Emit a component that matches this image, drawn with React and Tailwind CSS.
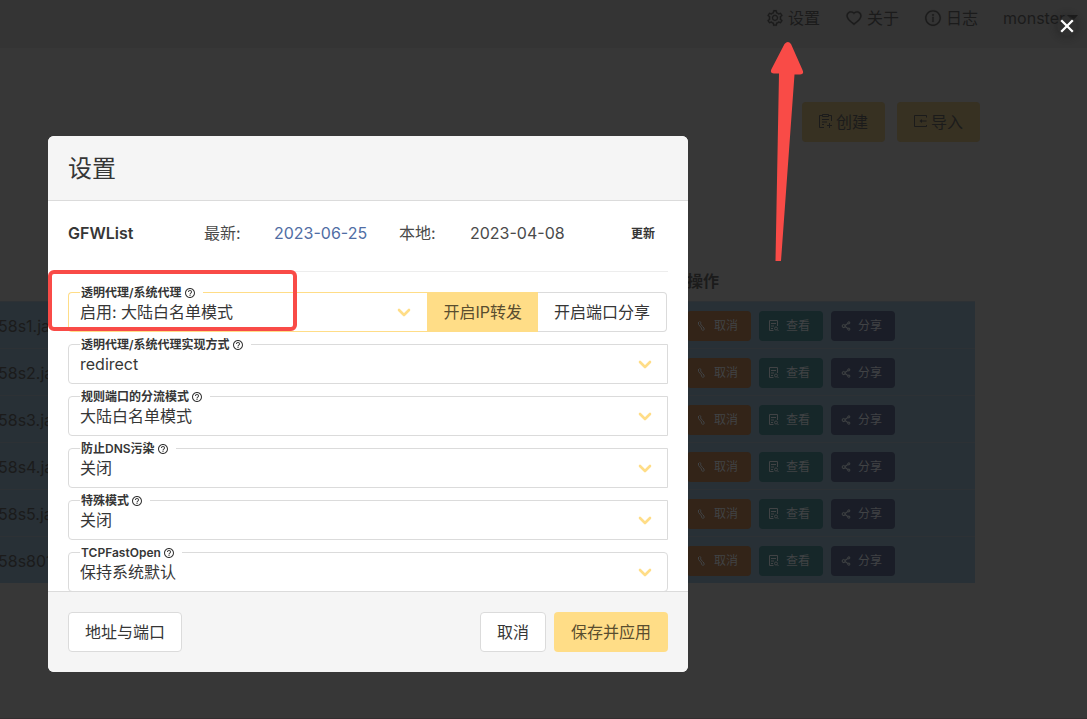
import React from "react";
import {
  AiOutlineSetting,
  AiOutlineHeart,
  AiOutlineInfoCircle,
  AiOutlineShareAlt,
} from "react-icons/ai";
import { MdHelpOutline } from "react-icons/md";

const servers = ["58s1.ja", "58s2.ja", "58s3.ja", "58s4.ja", "58s5.ja", "58s801"];

function CreateIcon() {
  return (
    <svg width="14" height="16" viewBox="0 0 14 16" fill="none" stroke="currentColor" aria-hidden="true">
      <path d="M3.500 1.500h-3v12H5M9.500 1.500h3V7" />
      <path d="M3.500.5h6v2h-6z" />
      <path d="M3 5.500h7M3 8h5M3 10.500h2M10.500 9v5M8 11.500h5" />
    </svg>
  );
}

function ImportIcon() {
  return (
    <svg width="14" height="16" viewBox="0 0 14 16" fill="none" stroke="currentColor" aria-hidden="true">
      <path d="M12.500 3.500V1.500H.5v11h12V11" />
      <path d="M12.500 7H7" />
      <path d="M5.500 7l2.500-2v4z" fill="currentColor" stroke="none" />
    </svg>
  );
}

function UnlinkIcon() {
  return (
    <svg width="12" height="12" viewBox="0 0 12 12" fill="none" stroke="currentColor" aria-hidden="true">
      <path d="M3.500 1.500C5 1.500 5 3 4.500 4L6.500 6.500M2.500 2v2.500l3 3.500c0 2 1 2.500 2 2.500M6.500 6.500l1.500 1.500v2" />
    </svg>
  );
}

function ViewIcon() {
  return (
    <svg width="12" height="12" viewBox="0 0 12 12" fill="none" stroke="currentColor" aria-hidden="true">
      <path d="M5.500 10.500h-4v-10h8V6M3 3.500h5M3 6h3M3 8.500h2" />
      <circle cx="8" cy="8.500" r="1.500" />
      <path d="M9 9.500l1.500 1.500" />
    </svg>
  );
}

function Chevron() {
  return (
    <svg
      className="pointer-events-none absolute top-4 right-4"
      width="14"
      height="9"
      viewBox="0 0 14 9"
      fill="none"
      stroke="#ffdd87"
      strokeWidth="2.600"
      strokeLinecap="round"
      strokeLinejoin="round"
      aria-hidden="true"
    >
      <path d="M2 2l5 5 5-5" />
    </svg>
  );
}

function Field({ id, label, value, shape = "rounded-l", border = "border-[#dbdbdb]" }) {
  return (
    <div className="relative min-w-0 flex-1">
      <label
        htmlFor={id}
        className="absolute -top-[7px] left-3 flex items-center gap-0.5 bg-white pr-[7px] pl-px text-[12px] leading-4 font-semibold text-[#363636]"
      >
        {label}
        <MdHelpOutline size={12} aria-hidden="true" />
      </label>
      <select
        id={id}
        defaultValue={value}
        className={`block h-10 w-full appearance-none border bg-white pr-10 pl-[11px] text-base text-[#363636] outline-none ${shape} ${border}`}
      >
        <option>{value}</option>
      </select>
      <Chevron />
    </div>
  );
}

function RowButton({ icon, text, color }) {
  return (
    <button type="button" className={`flex h-[30px] w-16 items-center gap-1.5 rounded-sm pl-[9px] text-[12px] text-[#414345] ${color}`}>
      {icon}
      {text}
    </button>
  );
}

function NavItem({ icon, text }) {
  return (
    <a href="#" className="flex items-center gap-1">
      {icon}
      {text}
    </a>
  );
}

export default function App() {
  return (
    <div className="relative min-h-screen overflow-hidden border-b border-[#332e30] bg-[#373737] font-['Inter','Noto_Sans_CJK_SC',sans-serif] text-base text-[#1b1b1b]">
      <nav className="flex h-12 items-center justify-end gap-[25px] bg-[#343434] pr-[9px] pb-3">
        <NavItem icon={<AiOutlineSetting size={18} strokeWidth={10} />} text="设置" />
        <NavItem icon={<AiOutlineHeart size={18} strokeWidth={10} />} text="关于" />
        <NavItem icon={<AiOutlineInfoCircle size={18} strokeWidth={10} />} text="日志" />
        <a href="#" className="flex items-center gap-0.5">
          monster
          <svg width="11" height="6" viewBox="0 0 11 6" fill="currentColor" aria-hidden="true">
            <path d="M0 0h11L5.500 6z" />
          </svg>
        </a>
      </nav>

      <main className="pt-[54px]">
        <div className="flex justify-end gap-3 pr-[107px]">
          <button type="button" className="flex h-10 items-center gap-[3px] rounded bg-[#373122] px-[17px]">
            <CreateIcon />
            创建
          </button>
          <button type="button" className="flex h-10 items-center gap-[3px] rounded bg-[#373122] px-[17px]">
            <ImportIcon />
            导入
          </button>
        </div>

        <div className="pt-[119px] pr-28">
          <table className="w-full border-collapse text-left">
            <thead>
              <tr className="h-10">
                <th aria-label="名称" />
                <th className="w-[300px] px-3 font-semibold">操作</th>
              </tr>
            </thead>
            <tbody>
              {servers.map((name) => (
                <tr key={name} className="h-[47px] border-t border-[#2d3135] bg-[#283036]">
                  <td className="p-0 pt-0.5">
                    <div className="-ml-0.5">{name}</div>
                  </td>
                  <td className="px-3 pt-0.5 pb-0">
                    <div className="flex gap-2">
                      <RowButton icon={<UnlinkIcon />} text="取消" color="bg-[#332418]" />
                      <RowButton icon={<ViewIcon />} text="查看" color="bg-[#162729]" />
                      <RowButton icon={<AiOutlineShareAlt size={12} strokeWidth={20} />} text="分享" color="bg-[#1a1d27]" />
                    </div>
                  </td>
                </tr>
              ))}
            </tbody>
          </table>
        </div>
      </main>

      <div className="absolute inset-0 pt-[136px] pl-12">
        <section role="dialog" aria-labelledby="dialog-title" className="flex h-[536px] w-[640px] max-w-full flex-col overflow-hidden rounded-md bg-white text-[#4a4a4a]">
          <header className="flex h-[65px] shrink-0 items-center border-b border-[#dbdbdb] bg-[#f5f5f5] px-5 pt-0.5">
            <h1 id="dialog-title" className="text-2xl text-[#363636]">设置</h1>
          </header>

          <div className="min-h-0 flex-1 overflow-hidden px-5 pt-5">
            <div className="grid grid-cols-[136px_70px_125px_71px_1fr_auto] items-center border-b border-[#ededed] pb-[26px] leading-6">
              <strong className="font-semibold text-[#363636]">GFWList</strong>
              <span>最新:</span>
              <a href="#" className="text-[#506da4]">2023-06-25</a>
              <span>本地:</span>
              <span>2023-04-08</span>
              <button type="button" className="px-[13px] pt-0.5 text-[12px] leading-5 font-semibold text-[#363636]">更新</button>
            </div>

            <div className="flex flex-col gap-3 pt-5">
              <div className="flex pr-px">
                <Field id="proxy" label="透明代理/系统代理" value="启用: 大陆白名单模式" border="border-[#ffdd87] border-r-0" />
                <button type="button" className="h-10 bg-[#ffdd87] px-4 text-[#594d2f]">开启IP转发</button>
                <button type="button" className="h-10 rounded-r border border-l-0 border-[#dbdbdb] px-4 text-[#363636]">开启端口分享</button>
              </div>
              <Field id="impl" label="透明代理/系统代理实现方式" value="redirect" />
              <Field id="route" label="规则端口的分流模式" value="大陆白名单模式" />
              <Field id="dns" label="防止DNS污染" value="关闭" />
              <Field id="special" label="特殊模式" value="关闭" />
              <Field id="tfo" label="TCPFastOpen" value="保持系统默认" shape="rounded" />
            </div>
          </div>

          <footer className="flex shrink-0 items-center gap-2 border-t border-[#dbdbdb] bg-[#f5f5f5] p-5 text-[#363636]">
            <button type="button" className="mr-auto h-10 rounded border border-[#dbdbdb] bg-white px-4">地址与端口</button>
            <button type="button" className="h-10 rounded border border-[#dbdbdb] bg-white px-4">取消</button>
            <button type="button" className="h-10 rounded bg-[#ffdd87] px-[17px] text-[#594d2f]">保存并应用</button>
          </footer>
        </section>
      </div>

      <div className="pointer-events-none absolute top-[270px] left-12 h-[61px] w-[249px] rounded-md border-4 border-[#f94b47]" />
      <svg className="pointer-events-none absolute top-[40px] left-[768px]" width="38" height="222" viewBox="0 0 38 222" fill="#f94b47" aria-hidden="true">
        <path d="M7.500 221L11 33.500H6Q1.500 33 3.500 29L16.500 4Q20 0 23 4L34.500 30Q36.500 34.500 32 34.500H26.500L13 221Z" />
      </svg>

      <button type="button" aria-label="关闭" className="absolute top-[16px] right-[10px] flex size-5 items-center justify-center rounded-full bg-[#2b2b2b]/50 shadow-[0_0_6px_2px_rgba(30,30,30,0.4)]">
        <svg width="14" height="14" viewBox="0 0 14 14" fill="none" stroke="#fff" strokeWidth="2.300" aria-hidden="true">
          <path d="M1.200 1.200l11.600 11.600M12.800 1.200L1.200 12.800" />
        </svg>
      </button>
    </div>
  );
}
